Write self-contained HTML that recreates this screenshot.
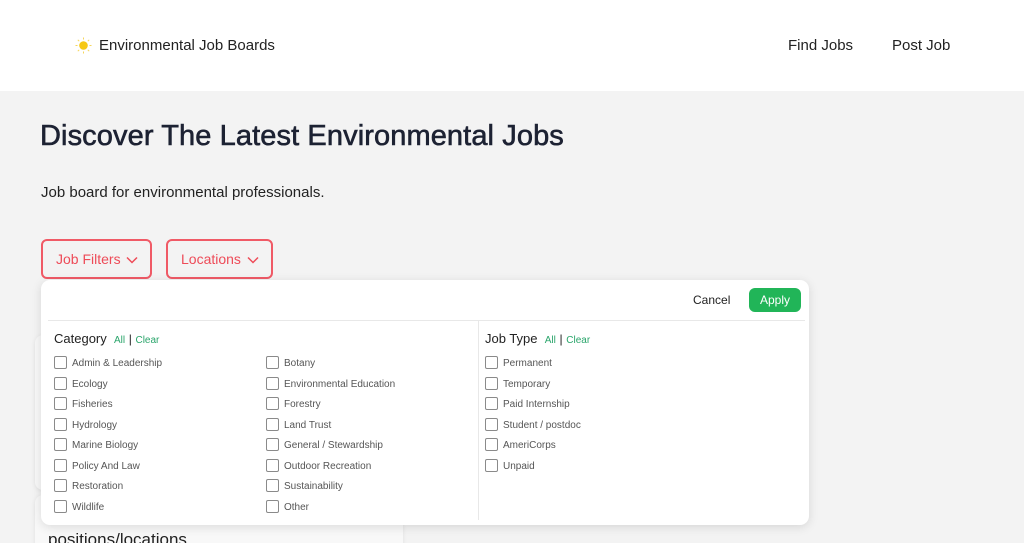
<!DOCTYPE html>
<html><head><style>
*{margin:0;padding:0;box-sizing:border-box}
html,body{width:1024px;height:543px;overflow:hidden}
body{background:#f3f3f3;font-family:"Liberation Sans",sans-serif;color:#1f2430;position:relative}
.hdr{position:absolute;left:0;top:0;width:1024px;height:91px;background:#fff}
.abs{position:absolute;white-space:nowrap}
.btn{position:absolute;top:239px;height:40px;border:2px solid #f05a66;border-radius:6px;color:#ee4b58;font-size:14px;line-height:36px;padding-left:13px}
.card{position:absolute;background:#f8f8f8;border-radius:8px;box-shadow:0 1px 4px rgba(0,0,0,.08)}
.panel{position:absolute;left:41px;top:280px;width:768px;height:245px;background:#fff;border-radius:9px;box-shadow:0 2px 10px rgba(0,0,0,.12)}
.it{position:absolute;font-size:10px;line-height:12px;color:#555;white-space:nowrap;margin-top:2px}
.it:before{content:"";position:absolute;left:-18px;top:-2px;width:11px;height:11px;border:1px solid #8a8a8a;border-radius:2px}
.h{position:absolute;font-size:13px;color:#222;white-space:nowrap}
.h span{font-size:10px;color:#2aa56b}
.h b{font-weight:normal;font-size:12px;color:#222}
</style></head><body>
<div class="hdr">
<svg class="abs" style="left:75px;top:37px" width="17" height="17" viewBox="0 0 17 17"><circle cx="8.5" cy="8.5" r="4.3" fill="#f6c814"/><g stroke="#f6d65a" stroke-width="1"><path d="M8.5 0.5v2M8.5 14.5v2M0.5 8.5h2M14.5 8.5h2M2.8 2.8l1.4 1.4M12.8 12.8l1.4 1.4M2.8 14.2l1.4-1.4M12.8 4.2l1.4-1.4"/></g></svg>
<div class="abs" style="left:99px;top:37px;font-size:15px;color:#222">Environmental Job Boards</div>
<div class="abs" style="left:788px;top:37px;font-size:15px;color:#222">Find Jobs</div>
<div class="abs" style="left:892px;top:37px;font-size:15px;color:#222">Post Job</div>
</div>
<div class="abs" style="left:40px;top:120px;font-size:29px;color:#1d2233;letter-spacing:0.1px;-webkit-text-stroke:0.6px #1d2233">Discover The Latest Environmental Jobs</div>
<div class="abs" style="left:41px;top:184px;font-size:15px;color:#222">Job board for environmental professionals.</div>
<div class="btn" style="left:41px;width:111px">Job Filters <svg width="12" height="8" viewBox="0 0 12 8" style="margin-left:2px"><path d="M1 1.5l5 5 5-5" fill="none" stroke="#ee4b58" stroke-width="1.5"/></svg></div>
<div class="btn" style="left:166px;width:107px">Locations <svg width="12" height="8" viewBox="0 0 12 8" style="margin-left:2px"><path d="M1 1.5l5 5 5-5" fill="none" stroke="#ee4b58" stroke-width="1.5"/></svg></div>
<div class="card" style="left:35px;top:335px;width:368px;height:155px"></div>
<div class="card" style="left:35px;top:495px;width:368px;height:60px"></div>
<div class="abs" style="left:48px;top:530px;font-size:17px;color:#222">positions/locations</div>
<div class="panel">
<div class="abs" style="left:652px;top:13px;font-size:12px;color:#222">Cancel</div>
<div class="abs" style="left:708px;top:8px;width:52px;height:24px;background:#21b558;border-radius:6px;color:#fff;font-size:12px;line-height:24px;text-align:center">Apply</div>
<div class="abs" style="left:7px;top:40px;width:757px;height:1px;background:#e8e8e8"></div>
<div class="abs" style="left:437px;top:41px;width:1px;height:199px;background:#e8e8e8"></div>
<div class="h" style="left:13px;top:51px">Category &nbsp;<span>All</span> <b>|</b> <span>Clear</span></div>
<div class="h" style="left:444px;top:51px">Job Type &nbsp;<span>All</span> <b>|</b> <span>Clear</span></div>
<div class="it" style="left:31px;top:76px">Admin &amp; Leadership</div>
<div class="it" style="left:31px;top:97px">Ecology</div>
<div class="it" style="left:31px;top:117px">Fisheries</div>
<div class="it" style="left:31px;top:138px">Hydrology</div>
<div class="it" style="left:31px;top:158px">Marine Biology</div>
<div class="it" style="left:31px;top:179px">Policy And Law</div>
<div class="it" style="left:31px;top:199px">Restoration</div>
<div class="it" style="left:31px;top:220px">Wildlife</div>
<div class="it" style="left:243px;top:76px">Botany</div>
<div class="it" style="left:243px;top:97px">Environmental Education</div>
<div class="it" style="left:243px;top:117px">Forestry</div>
<div class="it" style="left:243px;top:138px">Land Trust</div>
<div class="it" style="left:243px;top:158px">General / Stewardship</div>
<div class="it" style="left:243px;top:179px">Outdoor Recreation</div>
<div class="it" style="left:243px;top:199px">Sustainability</div>
<div class="it" style="left:243px;top:220px">Other</div>
<div class="it" style="left:462px;top:76px">Permanent</div>
<div class="it" style="left:462px;top:97px">Temporary</div>
<div class="it" style="left:462px;top:117px">Paid Internship</div>
<div class="it" style="left:462px;top:138px">Student / postdoc</div>
<div class="it" style="left:462px;top:158px">AmeriCorps</div>
<div class="it" style="left:462px;top:179px">Unpaid</div>
</div>
</body></html>
